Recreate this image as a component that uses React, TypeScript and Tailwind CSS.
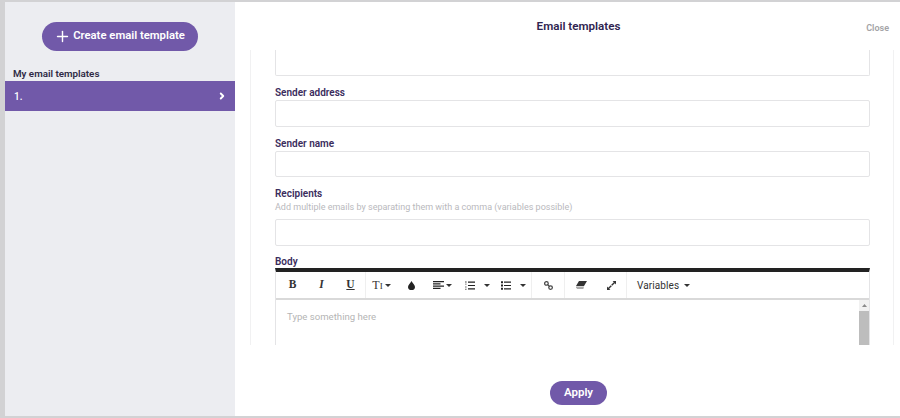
import type { ReactNode } from "react";
import { ChevronRight, Plus } from "lucide-react";

const FONT = "font-['Roboto',sans-serif]";

function Caret({ className = "" }: { className?: string }) {
  return (
    <svg width="6" height="3" viewBox="0 0 6 3" className={className}>
      <path d="M0 0h6L3 3z" fill="#333" />
    </svg>
  );
}

function Field({ label, hint }: { label: string; hint?: string }) {
  return (
    <div className="mt-[8px] flex shrink-0 flex-col">
      <label className="h-[16px] text-[10px] leading-[18px] font-semibold text-[#3a2c5c]">
        {label}
      </label>
      {hint && (
        <span className="h-[12px] text-[9px] leading-[12px] text-[#b9b9bd]">
          {hint}
        </span>
      )}
      <div className={`${hint ? "mt-[6px]" : ""} h-[26.5px] rounded-[2px] border border-[#e4e4e6] bg-white`} />
    </div>
  );
}

function ToolGroup({ children, last }: { children: ReactNode; last?: boolean }) {
  return (
    <div className={`flex h-full items-center ${last ? "" : "border-r border-[#efefef]"}`}>
      {children}
    </div>
  );
}

function Tool({ width, children }: { width: number; children: ReactNode }) {
  return (
    <div className="flex h-full shrink-0 items-center justify-center gap-[2px]" style={{ width }}>
      {children}
    </div>
  );
}

function Toolbar() {
  return (
    <div className="flex h-[28px] items-center border-b-2 border-[#d9d9d9] bg-white pl-[2px] text-[#333]">
      <ToolGroup>
        <Tool width={29}>
          <span className="font-['Liberation_Serif',serif] text-[11.5px] font-bold">B</span>
        </Tool>
        <Tool width={29}>
          <span className="font-['Liberation_Serif',serif] text-[11.5px] font-bold italic">I</span>
        </Tool>
        <Tool width={29}>
          <span className="font-['Liberation_Serif',serif] text-[11.5px] font-bold underline">U</span>
        </Tool>
      </ToolGroup>
      <ToolGroup>
        <Tool width={31}>
          <span className="font-['Liberation_Serif',serif] text-[12px] leading-none">
            T<span className="text-[9px]">I</span>
          </span>
          <Caret />
        </Tool>
        <Tool width={28}>
          <svg width="7" height="9" viewBox="0 0 7 9">
            <path d="M3.5 0C4.4 2.2 7 3.9 7 5.9A3.5 3.1 0 0 1 0 5.9C0 3.9 2.6 2.2 3.5 0z" fill="#222" />
          </svg>
        </Tool>
        <Tool width={34}>
          <svg width="11" height="8" viewBox="0 0 11 8">
            <path d="M0 0h11v1.2H0zM0 2.3h7.5v1.2H0zM0 4.5h11v1.2H0zM0 6.8h7.5V8H0z" fill="#222" />
          </svg>
          <Caret />
        </Tool>
        <Tool width={37}>
          <svg width="10" height="9" viewBox="0 0 10 9">
            <path d="M3 .6h7v1.2H3zM3 3.9h7v1.2H3zM3 7.2h7v1.2H3z" fill="#222" />
            <path d="M.4 0h1v2.4h-1zM0 3.4h1.6v.6H0zM0 5h1.6v.6H0zM0 6.6h1.6v.6H0zM0 8.3h1.6V9H0z" fill="#666" />
          </svg>
          <Caret className="ml-[7px]" />
        </Tool>
        <Tool width={35}>
          <svg width="10" height="9" viewBox="0 0 10 9">
            <path d="M3 .6h7v1.2H3zM3 3.9h7v1.2H3zM3 7.2h7v1.2H3z" fill="#222" />
            <path d="M0 .2h2v2H0zM0 3.5h2v2H0zM0 6.8h2v2H0z" fill="#222" />
          </svg>
          <Caret className="ml-[7px]" />
        </Tool>
      </ToolGroup>
      <ToolGroup>
        <Tool width={32}>
          <svg width="9" height="9" viewBox="0 0 10 10" fill="none" stroke="#444" strokeWidth="1.4">
            <circle cx="2.7" cy="2.7" r="2" />
            <circle cx="7.3" cy="7.3" r="2" />
            <path d="M4 4l2 2" />
          </svg>
        </Tool>
      </ToolGroup>
      <ToolGroup>
        <Tool width={32}>
          <svg width="11" height="8" viewBox="0 0 11 8">
            <path d="M3 0h8L8 5H0z" fill="#333" />
            <path d="M0 5.6h8L7.4 8H1.2L0 6.6z" fill="#aaa" />
          </svg>
        </Tool>
        <Tool width={29}>
          <svg width="9" height="9" viewBox="0 0 9 9" fill="none">
            <path d="M5.6 0H9v3.4L7.8 2.2 5.2 4.8l-1-1 2.6-2.6zM3.4 9H0V5.6l1.2 1.2 2.6-2.6 1 1-2.6 2.6z" fill="#333" />
          </svg>
        </Tool>
      </ToolGroup>
      <ToolGroup last>
        <div className="ml-[10px] flex items-center gap-[5px]">
          <span className="text-[10px] tracking-[0.1px] text-[#333]">Variables</span>
          <Caret />
        </div>
      </ToolGroup>
    </div>
  );
}

function Editor() {
  return (
    <div className="relative h-[77px] shrink-0 border-x border-[#e4e4e6] border-t-4 border-t-[#222]">
      <Toolbar />
      <p className="pt-[10px] pl-[11px] text-[9.6px] leading-[14px] text-[#b5b5b5]">Type something here</p>
      <div className="absolute top-[28px] right-0 bottom-0 flex w-[10px] flex-col bg-[#f1f1f1]">
        <div className="flex h-[11px] items-center justify-center">
          <svg width="5" height="3" viewBox="0 0 5 3">
            <path d="M2.5 0L5 3H0z" fill="#8a8a8a" />
          </svg>
        </div>
        <div className="flex-1 bg-[#bdbdbd]" />
      </div>
    </div>
  );
}

export default function App() {
  return (
    <div className={`${FONT} flex h-[418px] w-[900px] flex-col overflow-hidden bg-[#d2d2d4]`}>
      <div className="h-[2px] shrink-0" />
      <div className="flex min-h-0 flex-1 pl-[5px]">
        <aside className="flex w-[230px] shrink-0 flex-col bg-[#ecedf1]">
          <button
            type="button"
            className="mx-auto mt-[20px] flex h-[29px] w-[156px] items-center justify-center gap-[2px] rounded-full bg-[#7159a9] pr-[1px] text-[11.3px] font-semibold text-white"
          >
            <Plus size={17} strokeWidth={2} />
            Create email template
          </button>
          <h2 className="mt-[15px] h-[15px] pl-[8px] text-[9.8px] leading-[15px] font-semibold text-[#2f2a45]">
            My email templates
          </h2>
          <div className="flex h-[30px] items-center justify-between bg-[#7159a9] pr-[8px] pl-[9px] text-[10px] font-medium text-white">
            <span>1.</span>
            <ChevronRight size={10} strokeWidth={4.5} />
          </div>
        </aside>
        <main className="flex min-w-0 flex-1 flex-col bg-white">
          <header className="relative flex h-[48px] shrink-0 items-center justify-center pt-[2px] pl-[22px]">
            <h1 className="text-[11.6px] font-semibold text-[#2f2450]">Email templates</h1>
            <button type="button" className="absolute top-[20px] right-[11px] text-[9px] font-semibold text-[#a3a3a6]">
              Close
            </button>
          </header>
          <div className="ml-[15px] mr-[6px] flex h-[295px] shrink-0 flex-col overflow-hidden border-x border-[#f1f1f2] pr-[23px] pl-[24px]">
            <div className="h-[26px] shrink-0 rounded-b-[2px] border-x border-b border-[#e4e4e6]" />
            <Field label="Sender address" />
            <Field label="Sender name" />
            <Field label="Recipients" hint="Add multiple emails by separating them with a comma (variables possible)" />
            <label className="mt-[7.5px] h-[15px] shrink-0 text-[10px] leading-[17px] font-semibold text-[#3a2c5c]">Body</label>
            <Editor />
          </div>
          <footer className="flex flex-1 items-start justify-center pt-[36px] pl-[22px]">
            <button
              type="button"
              className="h-[24px] w-[57px] rounded-full bg-[#7159a9] text-[11.5px] font-semibold text-white"
            >
              Apply
            </button>
          </footer>
        </main>
      </div>
      <div className="h-[2px] shrink-0" />
    </div>
  );
}
